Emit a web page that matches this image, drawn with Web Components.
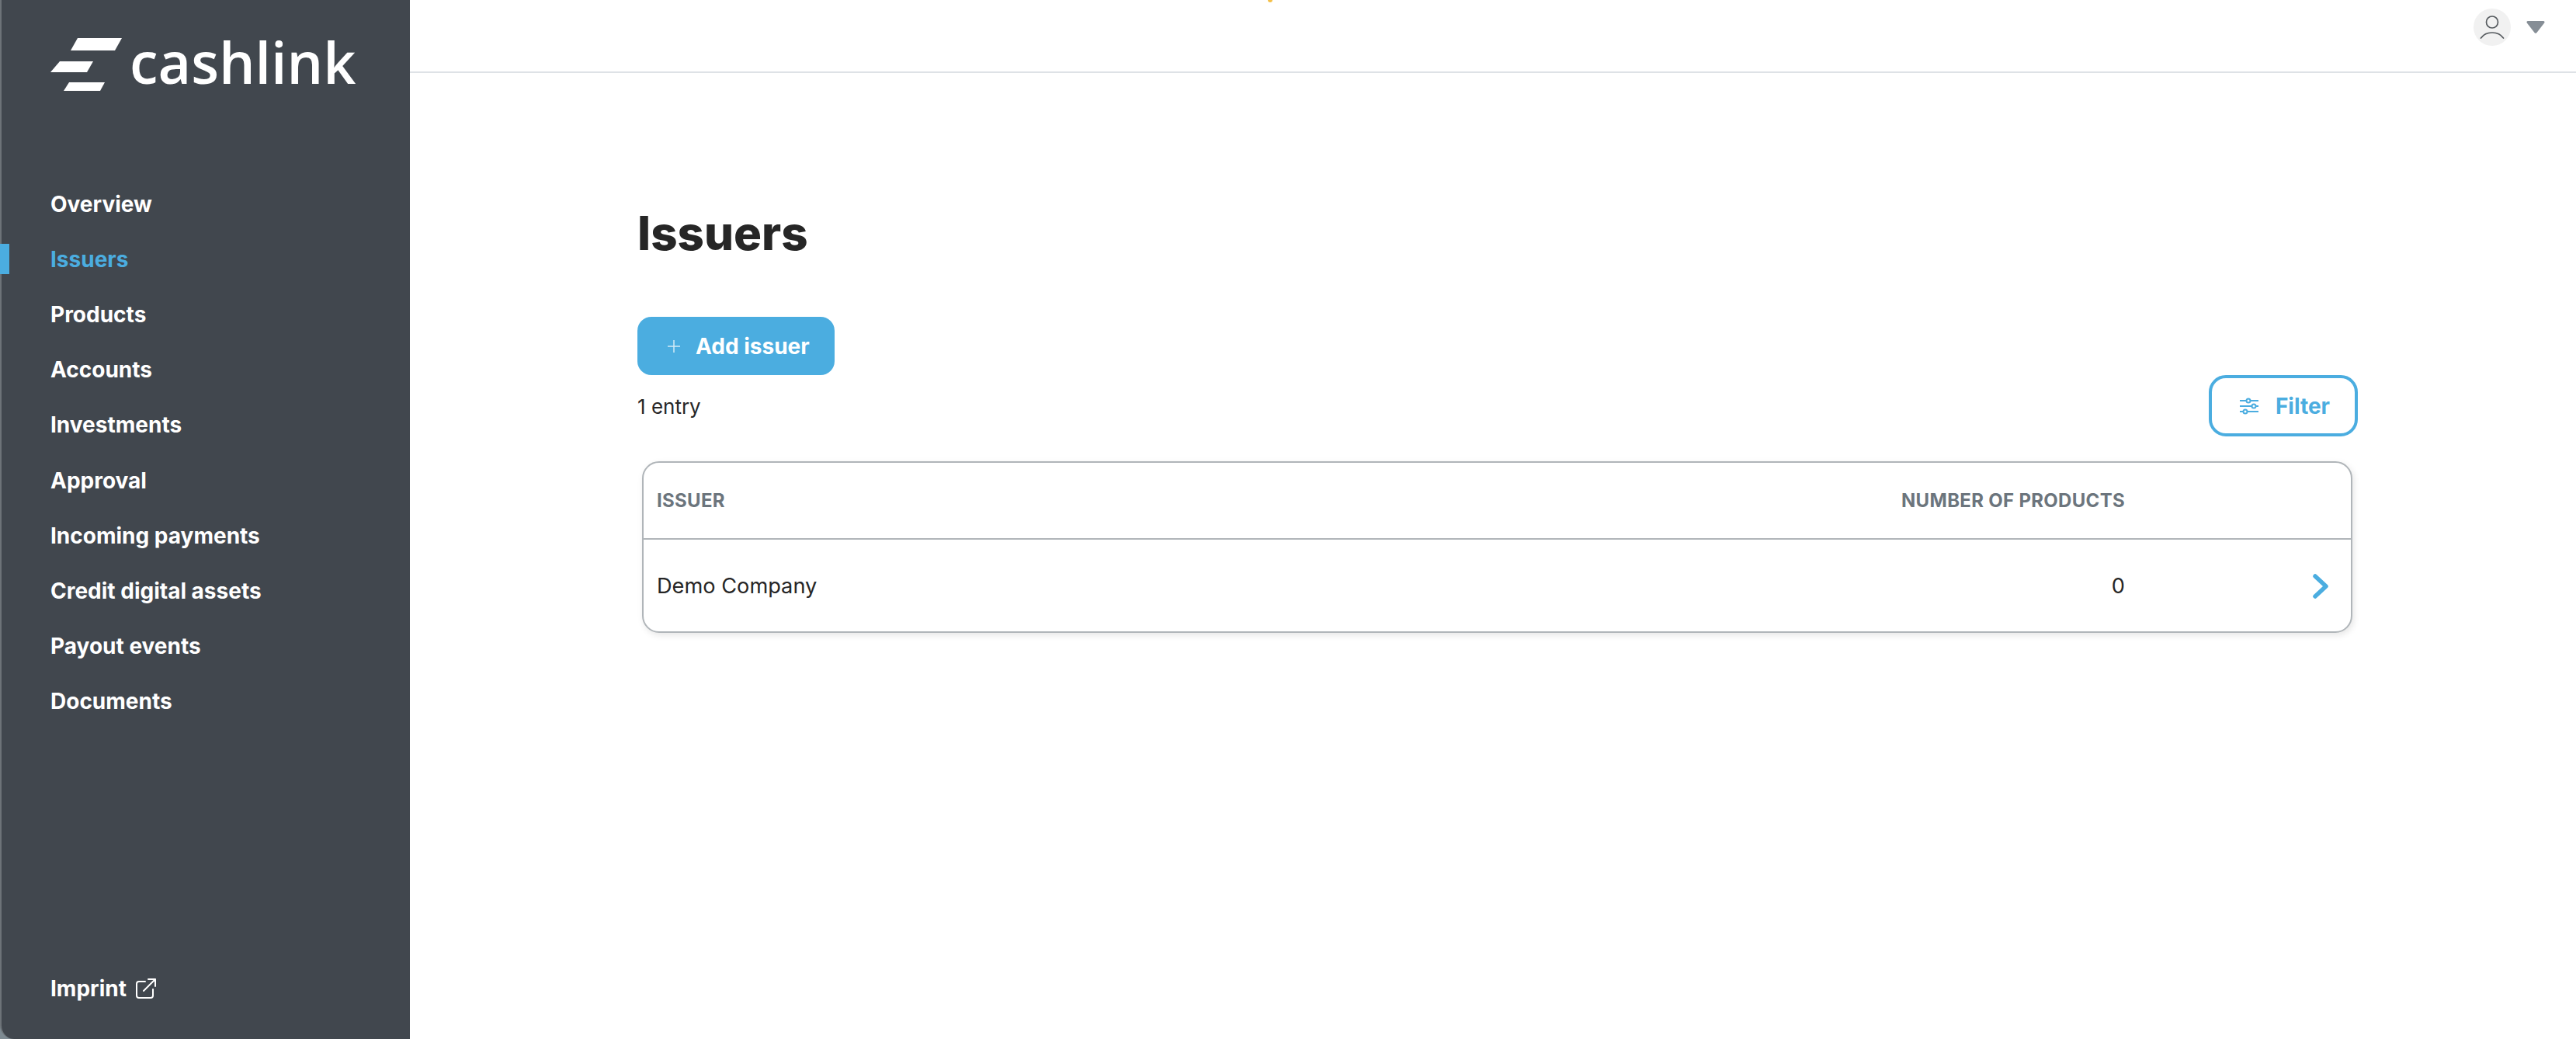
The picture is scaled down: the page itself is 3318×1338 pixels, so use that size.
<!DOCTYPE html>
<html lang="en">
<head>
<meta charset="utf-8">
<title>Issuers</title>
<style>
  html, body { margin: 0; height: 100%; background: #fff; }
  body { font-family: Inter, "Liberation Sans", sans-serif; color: #262626; }
</style>
</head>
<body>
<app-shell>
  <side-nav slot="side">
    <nav-item>Overview</nav-item>
    <nav-item active>Issuers</nav-item>
    <nav-item>Products</nav-item>
    <nav-item>Accounts</nav-item>
    <nav-item>Investments</nav-item>
    <nav-item>Approval</nav-item>
    <nav-item>Incoming payments</nav-item>
    <nav-item>Credit digital assets</nav-item>
    <nav-item>Payout events</nav-item>
    <nav-item>Documents</nav-item>
  </side-nav>
  <top-bar slot="top"></top-bar>
  <issuers-page></issuers-page>
</app-shell>

<script>
class AppShell extends HTMLElement {
  constructor() {
    super();
    this.attachShadow({ mode: 'open' });
    this.shadowRoot.innerHTML = `
      <style>
        :host { display: flex; height: 1338px; overflow: hidden; background: #7d8a92; }
        .content { flex: 1; min-width: 0; display: flex; flex-direction: column; background: #fff; }
      </style>
      <slot name="side"></slot>
      <div class="content">
        <slot name="top"></slot>
        <slot></slot>
      </div>
    `;
  }
}

class SideNav extends HTMLElement {
  constructor() {
    super();
    this.attachShadow({ mode: 'open' });
    this.shadowRoot.innerHTML = `
      <style>
        :host {
          display: flex;
          flex-direction: column;
          box-sizing: border-box;
          width: 528px;
          flex: none;
          height: 100%;
          background: #41474e;
          border-left: 2px solid #6d7378;
          border-bottom-left-radius: 18px;
          color: #fff;
        }
        .logo { display: flex; align-items: center; gap: 10px; height: 72px; margin: 47px 0 0 63px; }
        .word {
          font: 600 73.5px/72px "Open Sans", sans-serif;
          position: relative;
          top: -3px;
        }
        .items { display: flex; flex-direction: column; margin-top: 108px; flex: 1; }
        .imprint {
          display: flex; align-items: center; gap: 11px;
          margin: 0 0 45px 63px;
          font: 700 28px/40px Inter, sans-serif;
        }
      </style>
      <div class="logo">
        <svg width="92" height="68" viewBox="0 0 92 68" fill="#fff">
          <path d="M35 0H92L83 16H26Z"/>
          <path d="M12 30H55L47 44H0Z"/>
          <path d="M24 57H70L64 68H17Z"/>
        </svg>
        <span class="word">cashlink</span>
      </div>
      <div class="items"><slot></slot></div>
      <div class="imprint">
        <span>Imprint</span>
        <svg width="28" height="28" viewBox="0 0 28 28" fill="none" stroke="#fff" stroke-width="2" stroke-linecap="round" stroke-linejoin="round">
          <path d="M13 5H5a3 3 0 0 0-3 3v15a3 3 0 0 0 3 3h15a3 3 0 0 0 3-3v-8"/>
          <path d="M11 17L26 2M17 2h9v9"/>
        </svg>
      </div>
    `;
  }
}

class NavItem extends HTMLElement {
  constructor() {
    super();
    this.attachShadow({ mode: 'open' });
    this.shadowRoot.innerHTML = `
      <style>
        :host {
          display: flex;
          align-items: center;
          height: 71.2px;
          flex: none;
          padding-left: 63px;
          position: relative;
          font: 700 28px/40px Inter, sans-serif;
          color: #fff;
        }
        :host([active]) { color: #4bade0; }
        :host([active])::before {
          content: "";
          position: absolute;
          left: -2px; top: 16px;
          width: 12px; height: 39px;
          background: #4bade0;
        }
      </style>
      <slot></slot>
    `;
  }
}

class TopBar extends HTMLElement {
  constructor() {
    super();
    this.attachShadow({ mode: 'open' });
    this.shadowRoot.innerHTML = `
      <style>
        :host {
          display: flex;
          align-items: center;
          justify-content: flex-end;
          box-sizing: border-box;
          height: 94px;
          flex: none;
          padding: 0 40px 22px 0;
          gap: 20px;
          border-bottom: 2px solid #dee2e6;
          position: relative;
        }
        .dot { position: absolute; left: 1105px; top: -3px; width: 6px; height: 6px; border-radius: 50%; background: #f5c04a; }
        .avatar { width: 48px; height: 48px; border-radius: 50%; background: #f1f1f1; display: flex; align-items: center; justify-content: center; }
      </style>
      <span class="dot"></span>
      <div class="avatar">
        <svg width="34" height="34" viewBox="0 0 34 34" fill="none" stroke="#555a5e" stroke-width="1.7" stroke-linecap="round">
          <circle cx="17" cy="10.5" r="7.5"/>
          <path d="M2.5 31C6 26 11 24 17 24s11 2 14.500 7"/>
        </svg>
      </div>
      <svg width="24" height="16" viewBox="0 0 24 16" fill="#868e96"><path d="M2 0H22a1.500 1.500 0 0 1 1.200 2.400L13.500 15a2 2 0 0 1-3 0L.8 2.400A1.500 1.500 0 0 1 2 0Z"/></svg>
    `;
  }
}

class ActionButton extends HTMLElement {
  constructor() {
    super();
    this.attachShadow({ mode: 'open' });
    this.shadowRoot.innerHTML = `
      <style>
        :host {
          display: inline-flex;
          align-items: center;
          box-sizing: border-box;
          height: 75px;
          gap: 19px;
          padding: 0 32px 0 38px;
          border-radius: 18px;
          background: #4bade0;
          color: #fff;
          font: 700 28px/40px Inter, sans-serif;
        }
        :host([outline]) {
          height: 79px;
          gap: 21px;
          padding: 0 32px 0 35px;
          background: #fff;
          color: #4bade0;
          border: 4px solid #4bade0;
          border-radius: 22px;
        }
        ::slotted(svg) { display: block; flex: none; }
      </style>
      <slot name="icon"></slot>
      <slot></slot>
    `;
  }
}

class IssuersTable extends HTMLElement {
  constructor() {
    super();
    this.attachShadow({ mode: 'open' });
    this.shadowRoot.innerHTML = `
      <style>
        :host {
          display: block;
          box-sizing: border-box;
          margin: 32px 7px 0 6px;
          height: 221px;
          border: 2px solid #b0b5b9;
          border-radius: 22px;
          box-shadow: 2px 3px 8px rgba(0, 0, 0, 0.1);
          background: #fff;
        }
        .row { display: grid; grid-template-columns: 1fr 400px 291px; align-items: center; padding-left: 17px; }
        .head {
          height: 97px;
          border-bottom: 2px solid #b0b5b9;
          font: 700 24px/30px Inter, sans-serif;
          letter-spacing: 0.3px;
          color: #6c757d;
          text-transform: uppercase;
        }
        .body { height: 120px; font: 400 27.2px/40px Inter, sans-serif; color: #262626; }
        .num { text-align: right; }
        .go { display: flex; justify-content: flex-end; padding-right: 29px; }
      </style>
      <div class="row head">
        <span>Issuer</span>
        <span class="num">Number of products</span>
        <span></span>
      </div>
      <div class="row body">
        <span>Demo Company</span>
        <span class="num">0</span>
        <span class="go">
          <svg width="20" height="32" viewBox="0 0 20 32" fill="none" stroke="#4bade0" stroke-width="5.500" stroke-linecap="round" stroke-linejoin="round">
            <path d="M3 3L17 16L3 29"/>
          </svg>
        </span>
      </div>
    `;
  }
}

class IssuersPage extends HTMLElement {
  constructor() {
    super();
    this.attachShadow({ mode: 'open' });
    this.shadowRoot.innerHTML = `
      <style>
        :host { display: block; padding: 0 281px 0 293px; flex: 1; }
        h1 { margin: 160px 0 0; height: 94px; font: 800 60px/92px Inter, sans-serif; color: #262626; }
        .tools { display: flex; align-items: center; justify-content: space-between; }
        .count { font: 400 26px/40px Inter, sans-serif; color: #262626; position: relative; top: 1px; }
        .add { display: flex; margin-top: 60px; }
      </style>
      <h1>Issuers</h1>
      <div class="add">
        <action-button>
          <svg slot="icon" width="18" height="18" viewBox="0 0 18 18" stroke="#fff" stroke-opacity=".75" stroke-width="1.500"><path d="M9 1V17M1 9H17"/></svg>
          Add issuer
        </action-button>
      </div>
      <div class="tools">
        <span class="count">1 entry</span>
        <action-button outline>
          <svg slot="icon" width="26" height="22" viewBox="0 0 26 22" fill="#fff" stroke="#4bade0" stroke-width="2">
            <path d="M1 4H25M1 11H25M1 18H25"/>
            <circle cx="12" cy="4" r="2.500"/>
            <circle cx="19" cy="11" r="2.500"/>
            <circle cx="8" cy="18" r="2.500"/>
          </svg>
          Filter
        </action-button>
      </div>
      <issuers-table></issuers-table>
    `;
  }
}

customElements.define('app-shell', AppShell);
customElements.define('side-nav', SideNav);
customElements.define('nav-item', NavItem);
customElements.define('top-bar', TopBar);
customElements.define('action-button', ActionButton);
customElements.define('issuers-table', IssuersTable);
customElements.define('issuers-page', IssuersPage);
</script>
</body>
</html>
